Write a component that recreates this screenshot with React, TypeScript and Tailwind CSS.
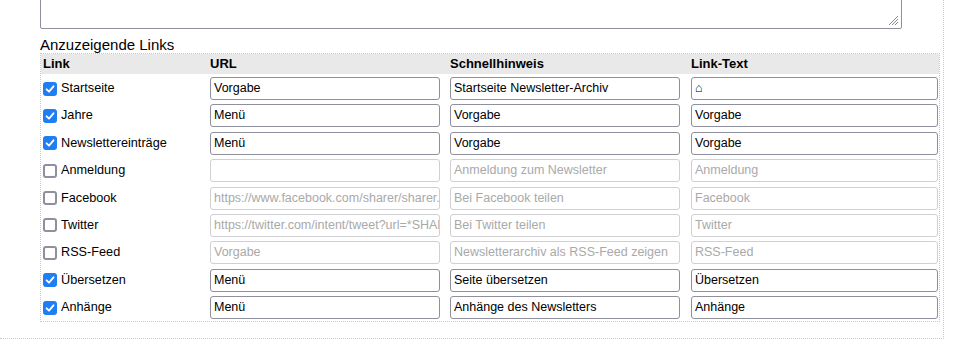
import React from "react"

type Row = {
  label: string
  checked: boolean
  url: string
  hint: string
  text: string
}

const rows: Row[] = [
  { label: "Startseite", checked: true, url: "Vorgabe", hint: "Startseite Newsletter-Archiv", text: "⌂" },
  { label: "Jahre", checked: true, url: "Menü", hint: "Vorgabe", text: "Vorgabe" },
  { label: "Newslettereinträge", checked: true, url: "Menü", hint: "Vorgabe", text: "Vorgabe" },
  { label: "Anmeldung", checked: false, url: "", hint: "Anmeldung zum Newsletter", text: "Anmeldung" },
  { label: "Facebook", checked: false, url: "https://www.facebook.com/sharer/sharer.php?u=*SHARELINK*", hint: "Bei Facebook teilen", text: "Facebook" },
  { label: "Twitter", checked: false, url: "https://twitter.com/intent/tweet?url=*SHARELINK*", hint: "Bei Twitter teilen", text: "Twitter" },
  { label: "RSS-Feed", checked: false, url: "Vorgabe", hint: "Newsletterarchiv als RSS-Feed zeigen", text: "RSS-Feed" },
  { label: "Übersetzen", checked: true, url: "Menü", hint: "Seite übersetzen", text: "Übersetzen" },
  { label: "Anhänge", checked: true, url: "Menü", hint: "Anhänge des Newsletters", text: "Anhänge" },
]

function Box({ checked }: { checked: boolean }) {
  if (checked) {
    return (
      <span className="flex h-[14px] w-[14px] shrink-0 items-center justify-center rounded-[3px] bg-[#1f7ef3]">
        <svg width="10" height="10" viewBox="0 0 10 10" fill="none">
          <path d="M1.6 5.3 L4 7.7 L8.5 2.3" stroke="white" strokeWidth="1.8" strokeLinecap="round" strokeLinejoin="round" />
        </svg>
      </span>
    )
  }
  return <span className="block h-[14px] w-[14px] shrink-0 rounded-[3px] border-2 border-[#8f8f9d] bg-white" />
}

function Field({ value, enabled, width }: { value: string; enabled: boolean; width: string }) {
  return (
    <div
      className={`h-[23px] ${width} overflow-hidden whitespace-nowrap rounded-[3px] border bg-white px-[3px] text-[12.5px] leading-[21px] ${
        enabled ? "border-[#8f8f9d] text-black" : "border-[#cfcfd4] text-[#a9a9a9]"
      }`}
    >
      {value}
    </div>
  )
}

export default function App() {
  return (
    <div className="w-[944px] border-r border-b border-dotted border-[#c8c8c8] pl-10 pr-[3px] pb-[16px] font-['Liberation_Sans',Arial,sans-serif] text-black">
      {/* Textarea (top scrolled out of view) */}
      <div className="relative -mt-[11px] h-[40px] w-[862px] rounded-[2px] border border-[#8f8f9d] bg-white">
        <svg className="absolute right-[2px] bottom-[2px]" width="12" height="12" viewBox="0 0 12 12">
          <path d="M11 2 L2 11 M11 5 L5 11 M11 8 L8 11" stroke="#8a8a8a" strokeWidth="1" />
        </svg>
      </div>

      <div className="mt-[7px] text-[15px] leading-[17px]">Anzuzeigende Links</div>

      <div className="w-[900px] border border-dotted border-[#c8c8c8]">
        {/* Header */}
        <div className="flex h-[20px] items-center bg-[#e9e9e9] text-[13px] font-bold">
          <div className="w-[167px] pl-[2px]">Link</div>
          <div className="w-[240px] pl-[2px]">URL</div>
          <div className="w-[241px] pl-[2px]">Schnellhinweis</div>
          <div className="w-[250px] pl-[2px]">Link-Text</div>
        </div>

        {/* Rows */}
        {rows.map((row) => (
          <div key={row.label} className="flex h-[27.4px] items-start pt-[3px]">
            <div className="flex h-[23px] w-[167px] items-center gap-[4px] pl-[2px] text-[12.7px]">
              <Box checked={row.checked} />
              <span>{row.label}</span>
            </div>
            <div className="w-[240px] pl-[2px]">
              <Field value={row.url} enabled={row.checked} width="w-[230px]" />
            </div>
            <div className="w-[241px] pl-[2px]">
              <Field value={row.hint} enabled={row.checked} width="w-[230px]" />
            </div>
            <div className="w-[250px] pl-[2px]">
              <Field value={row.text} enabled={row.checked} width="w-[247px]" />
            </div>
          </div>
        ))}
      </div>
    </div>
  )
}
